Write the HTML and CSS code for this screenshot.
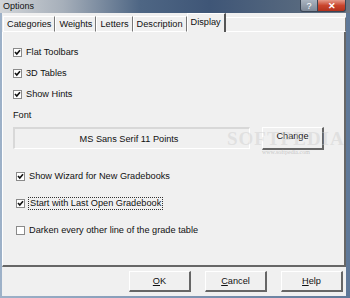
FILE: index.html
```html
<!DOCTYPE html>
<html>
<head>
<meta charset="utf-8">
<link rel="stylesheet" href="styles.css">
</head>
<body>
<div class="window">
  <div class="titlebar">
    <span class="title">Options</span>
    <div class="ctl">
      <span class="help-btn">?</span>
      <span class="close-btn">&#x2715;</span>
    </div>
  </div>
  <div class="client">
    <div class="tabs">
      <span class="tab">Categories</span>
      <span class="tab">Weights</span>
      <span class="tab">Letters</span>
      <span class="tab">Description</span>
      <span class="tab active">Display</span>
      <span class="tab-fill"></span>
    </div>
    <div class="panel">
      <div class="group top-group">
        <label class="chk"><span class="box"><svg viewBox="0 0 7 7"><polyline points="1,3 2.8,5 6,1.2" /></svg></span>Flat Toolbars</label>
        <label class="chk"><span class="box"><svg viewBox="0 0 7 7"><polyline points="1,3 2.8,5 6,1.2" /></svg></span>3D Tables</label>
        <label class="chk"><span class="box"><svg viewBox="0 0 7 7"><polyline points="1,3 2.8,5 6,1.2" /></svg></span>Show Hints</label>
      </div>
      <div class="font-label">Font</div>
      <div class="font-row">
        <div class="font-box">MS Sans Serif 11 Points</div>
        <button class="btn change">Change</button>
        <span class="wm">SOFTPEDIA<small>www.softpedia.com</small></span>
      </div>
      <div class="group bottom-group">
        <label class="chk"><span class="box"><svg viewBox="0 0 7 7"><polyline points="1,3 2.8,5 6,1.2" /></svg></span>Show Wizard for New Gradebooks</label>
        <label class="chk"><span class="box"><svg viewBox="0 0 7 7"><polyline points="1,3 2.8,5 6,1.2" /></svg></span><span class="focus">Start with Last Open Gradebook</span></label>
        <label class="chk"><span class="box"></span>Darken every other line of the grade table</label>
      </div>
    </div>
    <div class="buttons">
      <button class="btn"><u>O</u>K</button>
      <button class="btn"><u>C</u>ancel</button>
      <button class="btn"><u>H</u>elp</button>
    </div>
  </div>
</div>
</body>
</html>
```
FILE: styles.css
```css
html, body {
  margin: 0;
  padding: 0;
}
body {
  width: 350px;
  height: 298px;
  overflow: hidden;
  background: #6f87a8;
  font-family: "Liberation Sans", Arial, sans-serif;
  font-size: 9.2px;
  color: #111;
}
.window {
  width: 350px;
  height: 298px;
  display: flex;
  flex-direction: column;
  background: linear-gradient(90deg, #9db1c8 0%, #7f96b4 50%, #5f7898 100%);
}
.titlebar {
  height: 13px;
  flex: none;
  display: flex;
  align-items: center;
  background: linear-gradient(90deg, #d2d5d8 0%, #a6afba 18%, #4e6684 40%, #3f5677 60%, #56687e 85%, #6d7785 100%);
}
.title {
  padding-left: 3px;
  font-size: 9px;
  color: #111;
  line-height: 13px;
}
.ctl {
  margin-left: auto;
  margin-right: 4px;
  display: flex;
  height: 13px;
  align-self: flex-start;
}
.help-btn, .close-btn {
  display: flex;
  align-items: center;
  justify-content: center;
  height: 11px;
  font-size: 9px;
  color: #fff;
  border: 1px solid #3a4656;
  border-top: none;
}
.help-btn {
  width: 16px;
  background: linear-gradient(#aab4c0, #7d8897);
  border-radius: 0 0 0 3px;
}
.close-btn {
  width: 27px;
  background: linear-gradient(#e59a8a, #c9452d 50%, #b3311c);
  border-left: none;
  border-radius: 0 0 3px 0;
  font-weight: bold;
}
.client {
  flex: 1;
  margin: 0 4px 2px 2px;
  background: #f0f0f0;
  display: flex;
  flex-direction: column;
}
.tabs {
  height: 19px;
  flex: none;
  display: flex;
  align-items: flex-end;
  padding-left: 1px;
}
.tab {
  height: 16px;
  line-height: 15px;
  padding: 0 3px 0 3px;
  border-top: 1px solid #fff;
  border-left: 1px solid #fff;
  border-right: 1px solid #777;
  box-sizing: border-box;
  white-space: nowrap;
  border-bottom: 1px solid #fff;
}
.tab.active {
  height: 19px;
  line-height: 17px;
  padding: 0 3px 0 3px;
  border-right: 2px solid #555;
  border-bottom: none;
}
.tab-fill {
  flex: 1;
  align-self: flex-end;
  height: 15px;
  border-top: 1px solid #fff;
  border-bottom: 1px solid #fff;
  border-right: 1px solid #777;
  box-sizing: border-box;
}
.panel {
  height: 235px;
  flex: none;
  box-sizing: border-box;
  border-left: 1px solid #fff;
  border-right: 2px solid #666;
  border-bottom: 2px solid #666;
  padding: 14px 0 0 10px;
  display: flex;
  flex-direction: column;
}
.group {
  display: flex;
  flex-direction: column;
}
.top-group {
  gap: 9px;
}
.chk {
  display: flex;
  align-items: center;
  height: 12px;
  gap: 4px;
  white-space: nowrap;
}
.box {
  width: 7px;
  height: 7px;
  border: 1px solid #8a8a8a;
  background: #fff;
  flex: none;
  display: flex;
}
.box svg {
  width: 7px;
  height: 7px;
}
.box polyline {
  fill: none;
  stroke: #111;
  stroke-width: 1.6;
}
.font-label {
  margin-top: 9px;
  height: 12px;
  line-height: 12px;
}
.font-row {
  position: relative;
  display: flex;
  align-items: flex-start;
  margin-top: 6px;
}
.font-box {
  width: 237px;
  height: 22px;
  box-sizing: border-box;
  border-top: 2px solid #d8d8d8;
  border-left: 2px solid #d8d8d8;
  border-right: 1px solid #fff;
  border-bottom: 1px solid #fff;
  display: flex;
  align-items: center;
  justify-content: center;
  padding-top: 1px;
  padding-right: 6px;
}
.btn {
  font-family: "Liberation Sans", Arial, sans-serif;
  font-size: 9.2px;
  color: #111;
  width: 62px;
  height: 21px;
  padding: 0;
  background: #f0f0f0;
  border-top: 1px solid #fff;
  border-left: 1px solid #fff;
  border-right: 2px solid #666;
  border-bottom: 2px solid #666;
  box-sizing: border-box;
}
.btn u {
  text-decoration: underline;
}
.change {
  margin-left: 12px;
  height: 23px;
  padding-bottom: 4px;
}
.wm {
  position: absolute;
  left: 214px;
  top: 3px;
  font-family: "Liberation Serif", serif;
  font-weight: bold;
  font-size: 19px;
  letter-spacing: 1px;
  color: rgba(205, 205, 205, 0.45);
  display: flex;
  flex-direction: column;
  align-items: center;
  line-height: 17px;
  pointer-events: none;
}
.wm small {
  font-size: 6px;
  font-weight: normal;
  letter-spacing: 0;
  line-height: 10px;
  color: rgba(170, 170, 170, 0.6);
}
.bottom-group {
  margin-top: 20px;
  padding-left: 3px;
  gap: 15px;
}
.focus {
  outline: 1px dotted #333;
  outline-offset: 0px;
  padding: 0 1px;
  line-height: 11px;
}
.buttons {
  flex: 1;
  display: flex;
  justify-content: flex-end;
  align-items: center;
  gap: 14px;
  padding-right: 3px;
  padding-bottom: 1px;
}
```
